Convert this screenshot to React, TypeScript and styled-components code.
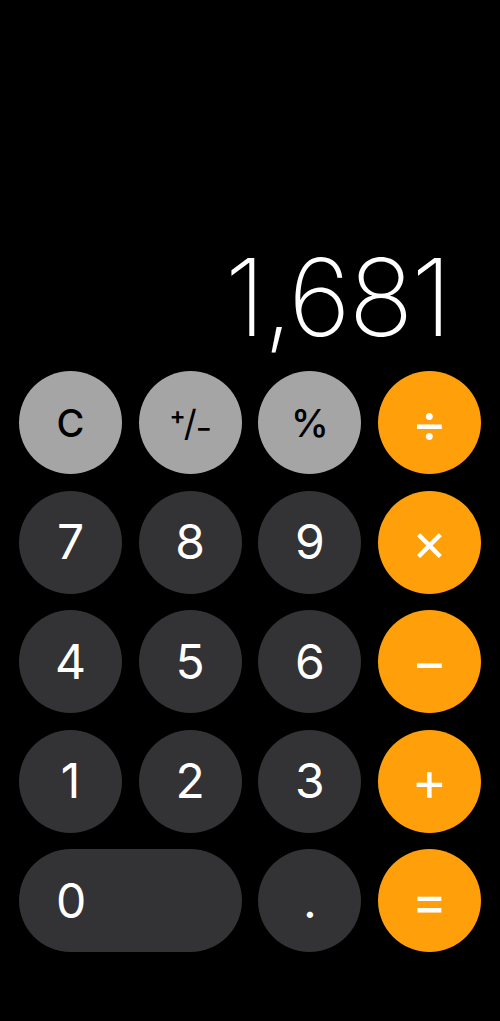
import React from 'react'
import styled, { createGlobalStyle } from 'styled-components'

const GlobalStyle = createGlobalStyle`
  html, body {
    margin: 0;
    padding: 0;
    background: #000;
  }
  body {
    font-family: Inter, "Noto Sans", "Liberation Sans", sans-serif;
  }
`

type Kind = 'fn' | 'num' | 'op'

interface Key {
  label: string
  kind: Kind
  wide?: boolean
  size?: number
}

const keys: Key[] = [
  { label: 'C', kind: 'fn', size: 38 },
  { label: '+/−', kind: 'fn', size: 30 },
  { label: '%', kind: 'fn', size: 38 },
  { label: '÷', kind: 'op' },
  { label: '7', kind: 'num' },
  { label: '8', kind: 'num' },
  { label: '9', kind: 'num' },
  { label: '×', kind: 'op' },
  { label: '4', kind: 'num' },
  { label: '5', kind: 'num' },
  { label: '6', kind: 'num' },
  { label: '−', kind: 'op' },
  { label: '1', kind: 'num' },
  { label: '2', kind: 'num' },
  { label: '3', kind: 'num' },
  { label: '+', kind: 'op' },
  { label: '0', kind: 'num', wide: true },
  { label: '.', kind: 'num' },
  { label: '=', kind: 'op' },
]

const colors: Record<Kind, { bg: string; fg: string }> = {
  fn: { bg: '#a5a5a5', fg: '#000' },
  num: { bg: '#333235', fg: '#fff' },
  op: { bg: '#ff9f0a', fg: '#fff' },
}

export default function App() {
  return (
    <>
      <GlobalStyle />
      <Screen>
        <Display>1,681</Display>
        <Pad>
          {keys.map((k, i) => (
            <Button key={i} $kind={k.kind} $wide={k.wide} $size={k.size}>
              {k.label === '+/−' ? (
                <PlusMinus>
                  <sup>+</sup>/<sub>−</sub>
                </PlusMinus>
              ) : (
                k.label
              )}
            </Button>
          ))}
        </Pad>
      </Screen>
    </>
  )
}

const Screen = styled.div`
  height: 1021px;
  display: flex;
  flex-direction: column;
  justify-content: flex-end;
  padding: 0 19px 69px;
  box-sizing: border-box;
`

const Display = styled.div`
  color: #fff;
  font-size: 107px;
  font-weight: 200;
  line-height: 1;
  text-align: right;
  padding-right: 31px;
  margin-bottom: 20px;
  letter-spacing: -2px;
`

const Pad = styled.div`
  display: grid;
  grid-template-columns: repeat(4, 103px);
  grid-auto-rows: 103px;
  column-gap: 16.67px;
  row-gap: 16.5px;
`

const Button = styled.div<{ $kind: Kind; $wide?: boolean; $size?: number }>`
  grid-column: ${p => (p.$wide ? 'span 2' : 'auto')};
  border-radius: 52px;
  background: ${p => colors[p.$kind].bg};
  color: ${p => colors[p.$kind].fg};
  display: flex;
  align-items: center;
  justify-content: ${p => (p.$wide ? 'flex-start' : 'center')};
  padding-left: ${p => (p.$wide ? '37px' : '0')};
  font-size: ${p => (p.$size ? p.$size : p.$kind === 'op' ? 54 : 48)}px;
  font-weight: ${p => (p.$kind === 'num' ? 400 : p.$kind === 'op' ? 400 : 500)};
  line-height: 1;
`

const PlusMinus = styled.span`
  display: flex;
  align-items: center;
  font-size: 36px;
  font-weight: 400;
  sup, sub {
    font-size: 24px;
    font-weight: 600;
    line-height: 1;
  }
  sup {
    transform: translate(2px, -7px);
  }
  sub {
    transform: translate(-1px, 5px);
  }
`
